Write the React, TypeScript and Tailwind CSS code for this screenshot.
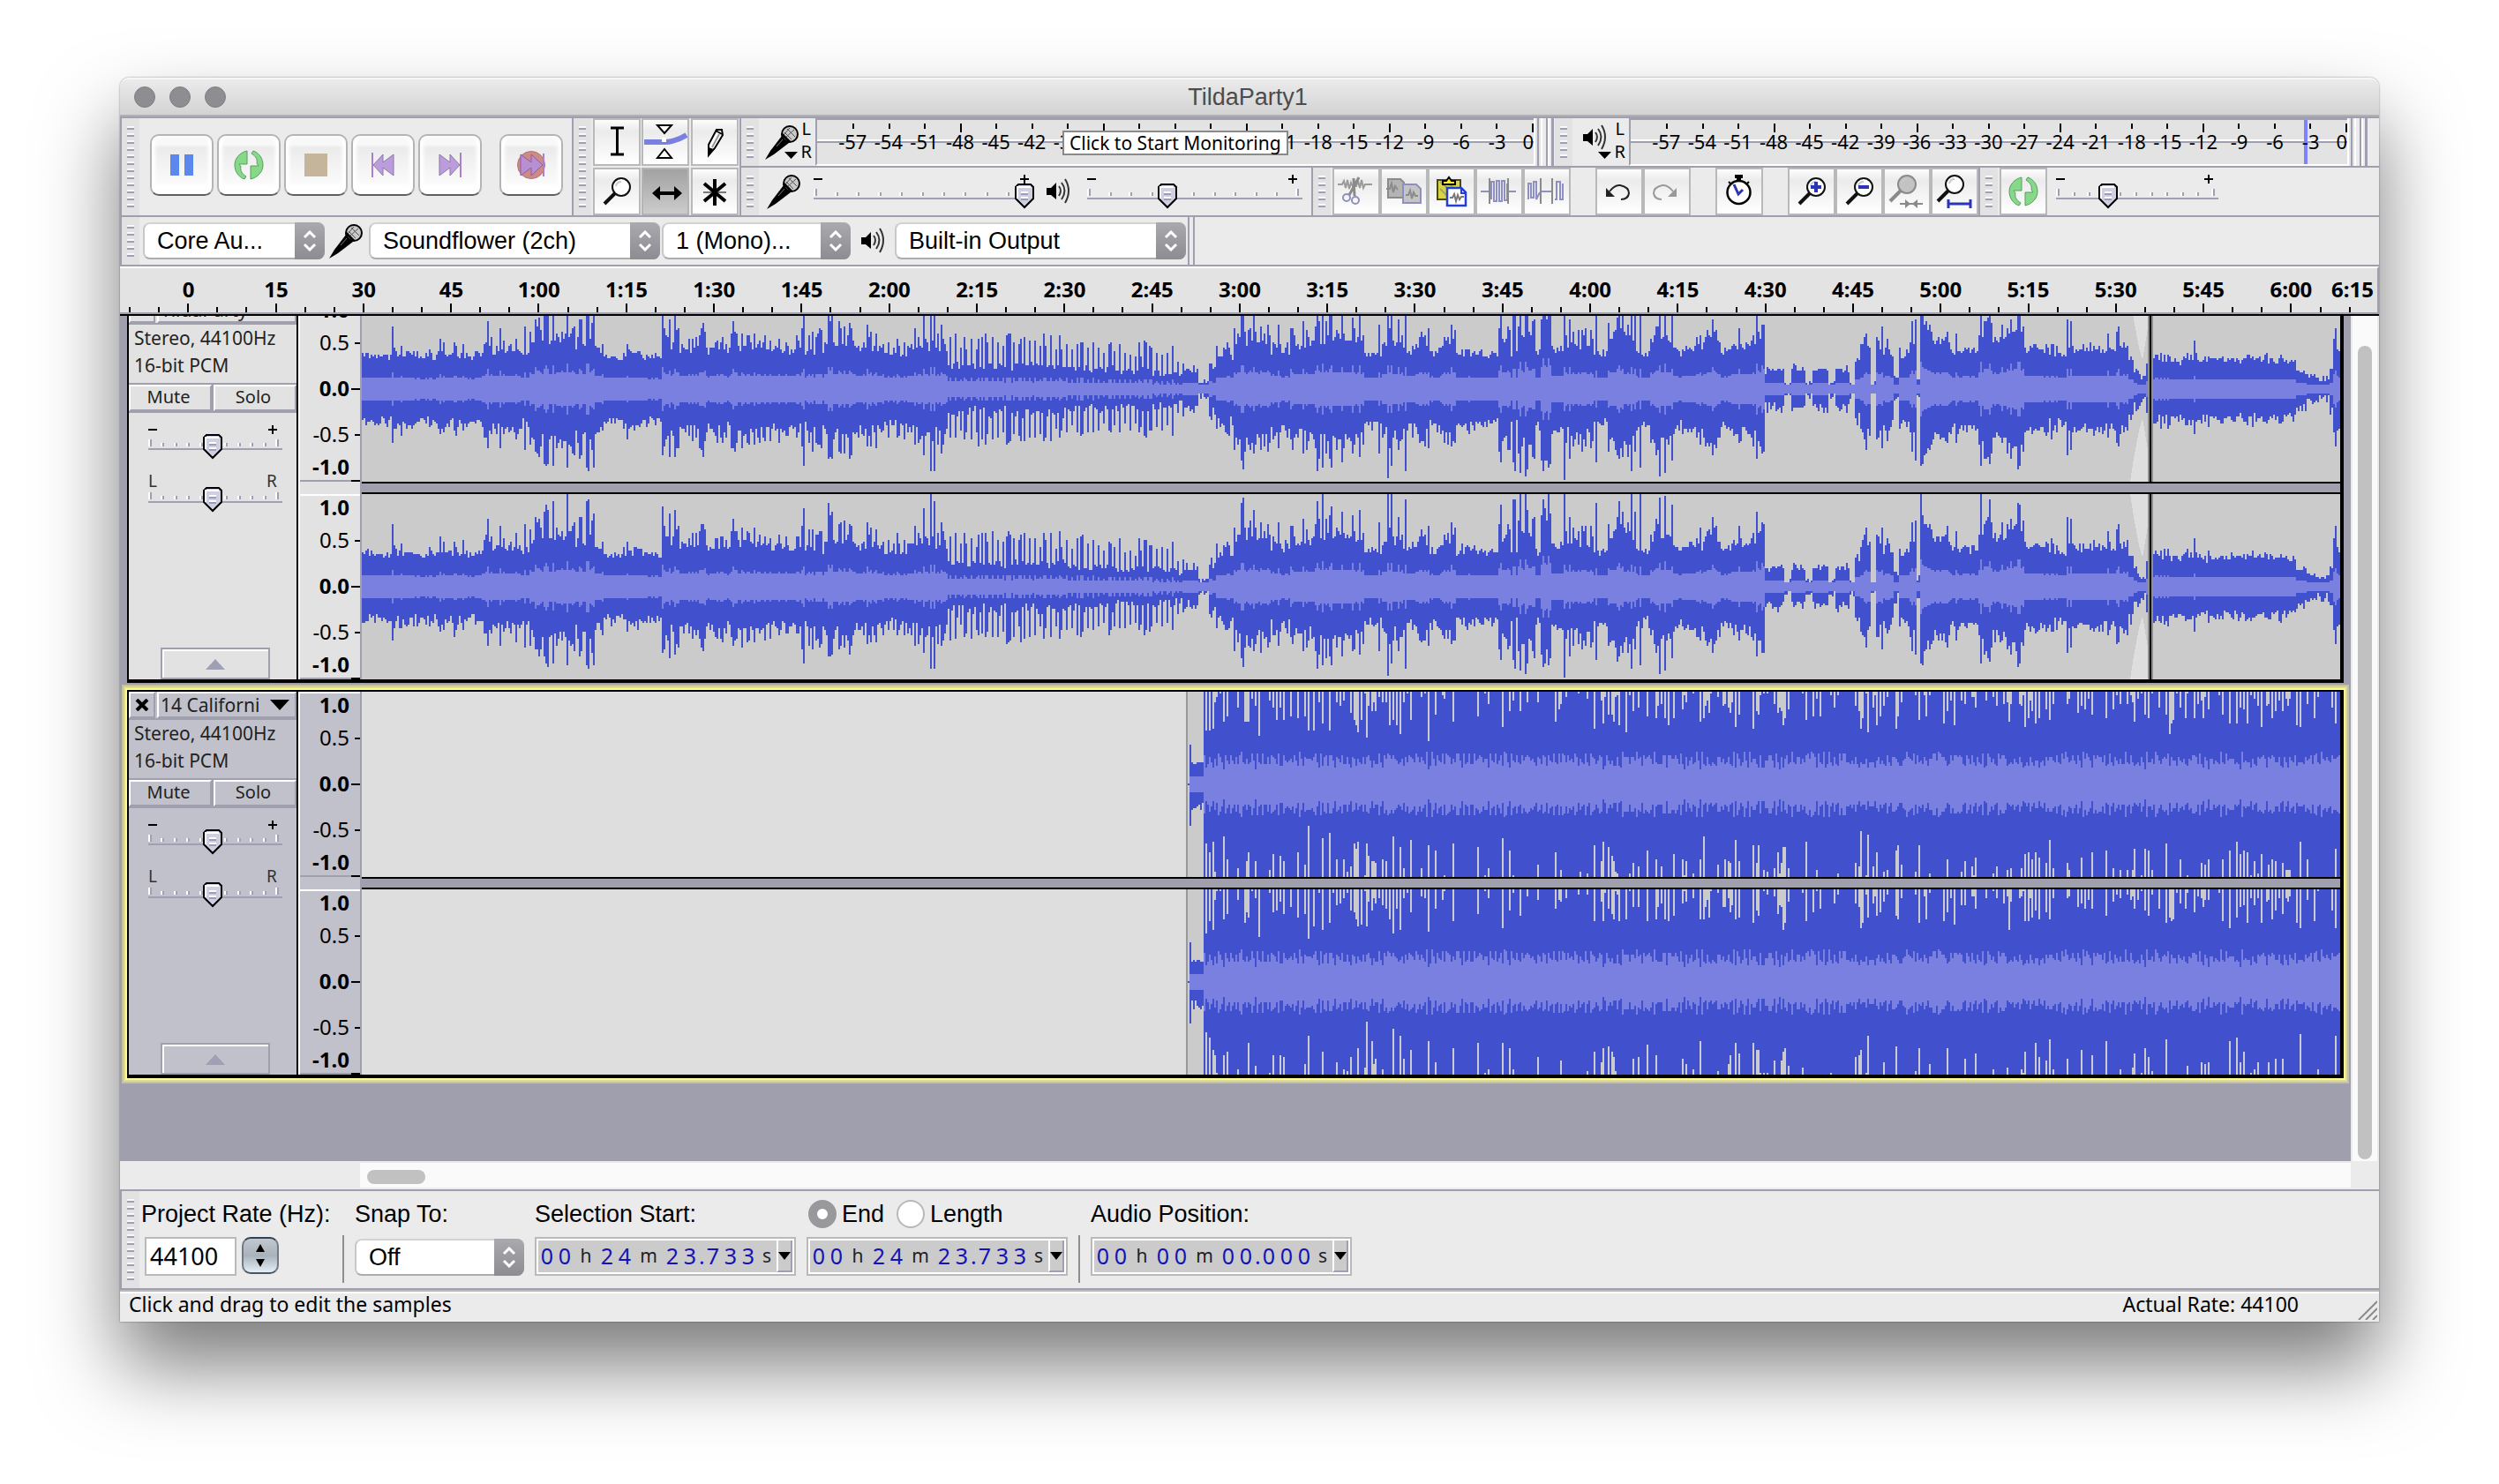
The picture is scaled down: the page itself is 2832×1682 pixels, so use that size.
import React from "react";

const NOTO = "font-['Noto_Sans',sans-serif]";
const HELV = "font-['Liberation_Sans',Arial,sans-serif]";

/* ---------- waveform data ---------- */

type Column = [outerUp: number, outerDown: number, inner: number];

const COLUMNS = 1121;

function random(seed: number) {
  let a = seed;
  return () => {
    a = (a + 0x6d2b79f5) | 0;
    let t = Math.imul(a ^ (a >>> 15), 1 | a);
    t = (t + Math.imul(t ^ (t >>> 7), 61 | t)) ^ t;
    return ((t ^ (t >>> 14)) >>> 0) / 4294967296;
  };
}

/* column, floor and ceiling of the amplitude from that column on */
const ENVELOPE: [number, number, number][] = [
  [0, 0.34, 0.4], [17, 0.35, 0.5], [28, 0.33, 0.4], [45, 0.35, 0.5], [60, 0.33, 0.4],
  [68, 0.4, 0.55], [80, 0.42, 0.62], [90, 0.36, 0.45], [95, 0.45, 0.75], [103, 0.5, 0.85],
  [113, 0.52, 0.9], [120, 0.45, 0.8], [127, 0.52, 0.85], [132, 0.42, 0.5], [137, 0.34, 0.4],
  [150, 0.36, 0.5], [158, 0.33, 0.38], [170, 0.42, 0.8], [182, 0.42, 0.7], [195, 0.38, 0.6],
  [210, 0.42, 0.68], [230, 0.4, 0.6], [248, 0.38, 0.65], [262, 0.45, 0.75], [280, 0.42, 0.68],
  [296, 0.36, 0.58], [310, 0.42, 0.7], [332, 0.22, 0.55], [400, 0.2, 0.5], [420, 0.18, 0.48],
  [445, 0.16, 0.45], [462, 0.12, 0.3], [466, 0.18, 0.24], [474, 0.05, 0.09], [480, 0.2, 0.3],
  [484, 0.34, 0.5], [494, 0.48, 0.68], [506, 0.5, 0.75], [515, 0.4, 0.6], [520, 0.38, 0.5],
  [526, 0.45, 0.7], [540, 0.5, 0.78], [556, 0.5, 0.74], [568, 0.35, 0.48], [578, 0.45, 0.75],
  [590, 0.4, 0.5], [597, 0.45, 0.6], [604, 0.36, 0.44], [612, 0.48, 0.65], [620, 0.36, 0.45],
  [644, 0.5, 0.8], [651, 0.35, 0.42], [655, 0.55, 0.9], [665, 0.35, 0.45], [668, 0.7, 0.95],
  [674, 0.4, 0.5], [682, 0.45, 0.65], [690, 0.45, 0.7], [698, 0.35, 0.4], [706, 0.5, 0.8],
  [714, 0.4, 0.8], [723, 0.35, 0.42], [730, 0.5, 0.75], [742, 0.38, 0.45], [748, 0.42, 0.62],
  [762, 0.5, 0.7], [770, 0.38, 0.45], [776, 0.45, 0.65], [790, 0.55, 0.75], [795, 0.18, 0.24],
  [806, 0.05, 0.08], [810, 0.19, 0.24], [818, 0.05, 0.08], [822, 0.19, 0.24], [831, 0.05, 0.07],
  [835, 0.19, 0.24], [843, 0.05, 0.07], [846, 0.3, 0.55], [851, 0.45, 0.65], [855, 0.04, 0.06],
  [858, 0.45, 0.7], [862, 0.35, 0.55], [868, 0.08, 0.2], [871, 0.35, 0.5], [877, 0.5, 0.78],
  [881, 0.08, 0.15], [883, 0.6, 0.8], [888, 0.5, 0.7], [900, 0.38, 0.48], [916, 0.55, 0.78],
  [924, 0.5, 0.6], [932, 0.6, 0.75], [942, 0.4, 0.48], [952, 0.35, 0.5], [966, 0.4, 0.6],
  [970, 0.4, 0.5], [984, 0.4, 0.5], [994, 0.42, 0.68], [1001, 0.3, 0.4], [1004, 0.16, 0.2],
  [1007, 0.11, 0.14], [1011, 0.25, 0.3], [1015, 0.32, 0.45], [1024, 0.29, 0.38],
  [1050, 0.3, 0.37], [1092, 0.28, 0.34], [1096, 0.19, 0.22], [1102, 0.13, 0.15],
  [1108, 0.11, 0.13], [1115, 0.2, 0.28], [1117, 0.4, 0.6], [1119, 0.38, 0.42],
];

const SPIKES: [number, number][] = [
  [17, 0.68], [44, 0.55], [71, 0.74], [78, 0.65], [92, 0.68], [98, 0.76], [104, 0.88],
  [108, 0.93], [116, 1], [123, 0.75], [127, 0.92], [128, 0.95], [170, 0.86], [177, 0.82],
  [194, 0.62], [210, 0.74], [250, 0.84], [264, 0.9], [266, 0.8], [286, 0.7], [318, 0.84],
  [322, 1], [324, 0.92], [498, 0.9], [499, 0.97], [505, 0.82], [519, 0.7], [526, 0.65],
  [533, 0.74], [541, 0.92], [544, 1], [549, 0.86], [555, 0.74], [561, 0.78], [565, 0.82],
  [576, 0.7], [581, 1], [583, 1], [587, 0.76], [591, 0.94], [604, 0.66], [617, 0.7],
  [645, 0.88], [652, 0.94], [653, 0.94], [656, 1], [659, 1], [669, 0.95], [672, 1], [681, 1],
  [684, 0.76], [699, 0.9], [712, 0.92], [714, 0.8], [719, 1], [721, 0.8], [724, 1],
  [735, 0.96], [738, 0.98], [742, 0.88], [765, 0.76], [780, 0.66], [790, 0.8], [793, 0.7],
  [883, 1], [903, 0.6], [917, 1], [922, 0.95], [929, 0.7], [934, 0.74], [938, 0.9],
  [939, 0.88], [966, 0.76], [968, 0.74], [989, 0.6], [995, 0.68], [1038, 0.52], [1118, 0.66],
];

function musicColumns(seed: number): Column[] {
  const shared = random(41);
  const own = random(seed);
  const spikes = new Map(SPIKES);
  const out: Column[] = [];
  let segment = 0;
  for (let i = 0; i < COLUMNS; i++) {
    while (segment + 1 < ENVELOPE.length && ENVELOPE[segment + 1][0] <= i) segment++;
    const [, low, high] = ENVELOPE[segment];
    const sparse = i >= 332 && i < 466;
    const r = shared();
    const beat = sparse ? (i % 3 === 0 || r > 0.9 ? 0.6 + r * 0.5 : r * 0.2) : r * r;
    const spike = spikes.get(i) ?? 0;
    const base = low + (high - low) * beat;
    const up = Math.max(base + (own() - 0.5) * 0.06, spike);
    const down = Math.max(base + (own() - 0.5) * 0.1, spike * (0.82 + 0.18 * shared()));
    const inner = Math.max(0.045, Math.min(0.36, low * 0.34 + (spike ? spike * 0.1 : (base - low) * 0.16)));
    out.push(i >= 1012 && i < 1015 ? [0, 0, 0] : [Math.min(1, up), Math.min(1, down), inner]);
  }
  return out;
}

function loudColumns(seed: number, lowerDensity: number): Column[] {
  const shared = random(977);
  const own = random(seed);
  const out: Column[] = [];
  for (let i = 0; i < COLUMNS; i++) {
    const r = shared();
    const s = shared();
    if (i < 468) out.push([0, 0, 0]);
    else if (i === 468) out.push([0.01, 0.01, 0]);
    else if (i < 477) out.push([i === 469 ? 0.42 : 0.21 + own() * 0.04, i === 469 ? 0.44 : 0.2 + own() * 0.1, 0.08]);
    else {
      const early = i < 620 ? 1 : 0.8;
      const notch = i % 2 === 0 ? 0.72 * early : 0.16;
      const up = r < notch ? 1 - Math.pow(own() * 0.25 + s * 0.75, 1.5) * 0.6 * early : 1;
      const down = r < notch * lowerDensity ? 1 - Math.pow(own() * 0.3 + s * 0.7, 1.7) * 0.62 * early : 1;
      const pulse = [0.32, 0.25, 0.2, 0.32, 0.27, 0.22, 0.3, 0.24, 0.21][(i + (s > 0.8 ? 1 : 0)) % 9];
      out.push([up, down, pulse + (r - 0.5) * 0.07]);
    }
  }
  return out;
}

/* stepped outline around the centre line, on a 105-row grid */
function outline(up: number[], down: number[]) {
  const mid = 52.5;
  const rows = (v: number) => (v > 0 ? Math.round(v * 52.5 - 0.5) + 0.5 : 0);
  const top = up.map((v, i) => `V${mid - rows(v)}H${i + 1}`).join("");
  const bottom = down
    .map((v, i) => `V${mid + rows(v)}H${i}`)
    .reverse()
    .join("");
  return `M0 ${mid}${top}${bottom}Z`;
}

function Waveform({ columns, clip, faded }: { columns: Column[]; clip: number; faded?: boolean }) {
  return (
    <svg
      viewBox="0 0 1121 105"
      preserveAspectRatio="none"
      shapeRendering="crispEdges"
      className="block h-[210px] w-full bg-[#dedede]"
      aria-hidden="true"
    >
      <rect x={clip} y="0" width={1121 - clip} height="105" fill="#cbcbcb" />
      {clip > 0 && <rect x={clip} y="0" width="1" height="105" fill="#999999" />}
      {faded && (
        <path d="M1002 0H1012V18L1009 36L1007 29L1004 13ZM1002 105H1012V87L1009 69L1007 76L1004 92Z" fill="#dedede" />
      )}
      <path d={outline(columns.map((c) => c[0]), columns.map((c) => c[1]))} fill="#4150cd" />
      <path d={outline(columns.map((c) => c[2]), columns.map((c) => c[2]))} fill="#7980e0" />
      {faded && (
        <>
          <rect x="1012" y="0" width="3" height="105" fill="#8f8f8f" />
          <rect x="1013" y="0" width="1" height="105" fill="#000" />
        </>
      )}
    </svg>
  );
}

/* ---------- small parts ---------- */

function Grabber({ bumps }: { bumps: number }) {
  return (
    <div className="flex w-5 shrink-0 flex-col items-center justify-center gap-1 self-stretch bg-[#e2e2e2]">
      {Array.from({ length: bumps }, (_, i) => (
        <span key={i} className="block h-1 w-2 border-b-2 border-[#a0a0b4] bg-[#f8f8ff]" />
      ))}
    </div>
  );
}

function Mic({ menu }: { menu?: boolean }) {
  return (
    <svg width="40" height="40" viewBox="0 0 40 40" aria-hidden="true">
      <path d="M20 13L28 21L11 34L1 40L7 30Z" fill="#000" />
      <path d="M22 16L14 25" stroke="#777" strokeWidth="1" />
      <circle cx="29" cy="11" r="9" fill="#c9c9c9" stroke="#000" strokeWidth="2" />
      <path d="M23 9L31 17M26 5L35 14M24 15L34 6M22 12L29 4" stroke="#555" strokeWidth="1" />
      <path d="M20 11L29 20" stroke="#000" strokeWidth="3" />
      {menu && <path d="M23 31H38L30.500 39Z" fill="#000" />}
    </svg>
  );
}

function Speaker({ menu }: { menu?: boolean }) {
  const height = menu ? 40 : 30;
  return (
    <svg width="32" height={height} viewBox={`0 0 32 ${height}`} aria-hidden="true">
      <path d="M0 11H5L11 5V24L5 19H0Z" fill="#000" />
      <path d="M14 9Q18 14 14 20M17 5Q24 14 17 24M21 1Q29 14 21 28" fill="none" stroke="#333" strokeWidth="2" />
      {menu && <path d="M17 31H32L24.500 39Z" fill="#000" />}
    </svg>
  );
}

const LOOP_HALF = "M14 0C6 2 0 8 0 16C0 24 5 30 11 32L13 29C8 26 6 22 7 18L5 15H14Z";

function Loop() {
  return (
    <svg width="34" height="34" viewBox="-1 -1 34 34" aria-hidden="true">
      <g fill="#86d989" stroke="#5c9c60" strokeWidth="1">
        <path d={LOOP_HALF} />
        <path d={LOOP_HALF} transform="rotate(180 16 16)" />
      </g>
    </svg>
  );
}

function Slider({ label, width, at, ends }: { label: string; width: number; at: number; ends?: [string, string] }) {
  const step = (width - 8) / 10;
  const [value, setValue] = React.useState(Math.round((at / width) * 100));
  return (
    <label className="relative block shrink-0">
      <input
        type="range"
        aria-label={label}
        value={value}
        onChange={(e) => setValue(Number(e.target.value))}
        className="absolute inset-0 z-10 h-full w-full opacity-0"
      />
      <svg width={width} height="42" viewBox={`0 0 ${width} 42`} className="block overflow-visible" aria-hidden="true">
        {ends ? (
          <g fontSize="19" fill="#333" className={NOTO}>
            <text x="0" y="12">{ends[0]}</text>
            <text x={width - 18} y="12">{ends[1]}</text>
          </g>
        ) : (
          <path d={`M0 7H10M${width - 16} 7H${width - 6}M${width - 11} 2V12`} stroke="#000" strokeWidth="2" />
        )}
        {Array.from({ length: 11 }, (_, i) => {
          const x = Math.round(i * step);
          const y = i % 10 === 0 ? 18 : 22;
          return (
            <g key={i}>
              <rect x={x} y={y} width="2" height={26 - y} fill="#fff" />
              <rect x={x + 2} y={y} width="2" height={26 - y} fill="#a0a0b4" />
            </g>
          );
        })}
        <rect x="0" y="28" width={width} height="2" fill="#a0a0b4" />
        <g transform={`translate(${at - 11} 12)`}>
          <path d="M4 1H18L21 4V17L11 27L1 17V4Z" fill="#cfcfe4" stroke="#000" strokeWidth="2" />
          <path d="M3 17V4H18" fill="none" stroke="#fff" strokeWidth="2" />
          <path d="M7 10H15M7 16H15" stroke="#fff" strokeWidth="2" />
          <path d="M7 12H15M7 18H15" stroke="#9c9cb4" strokeWidth="2" />
        </g>
      </svg>
    </label>
  );
}

function Select({ label, text, box }: { label: string; text: string; box: string }) {
  return (
    <div className={`relative h-[42px] shrink-0 ${box}`}>
      <select
        aria-label={label}
        className={`${HELV} h-full w-full appearance-none rounded-lg border-2 border-t-[#d2d2d2] border-r-[#c8c8c8] border-b-[#adadad] border-l-[#c8c8c8] bg-white pl-[14px] text-[27px] leading-[36px] text-black`}
      >
        <option>{text}</option>
      </select>
      <span className="pointer-events-none absolute inset-y-0 right-0 flex w-[34px] items-center justify-center rounded-r-lg bg-linear-to-b from-[#a9a9ae] to-[#8c8c92]">
        <svg width="16" height="24" viewBox="0 0 16 24" fill="none" stroke="#fff" strokeWidth="3" aria-hidden="true">
          <path d="M2 8L8 2L14 8M2 16L8 22L14 16" />
        </svg>
      </span>
    </div>
  );
}

function Transport({ label, children }: { label: string; children: React.ReactNode }) {
  return (
    <button
      aria-label={label}
      className="flex h-[70px] w-[72px] items-center justify-center rounded-[10px] border-2 border-t-[#b4b4b4] border-r-[#b4b4b4] border-b-[#606060] border-l-[#b4b4b4] bg-linear-to-b from-[#f8f8f8] from-15% via-[#ebebeb] via-20% to-white shadow-[inset_4px_0_4px_#fff,inset_-4px_0_4px_#fff,inset_0_-10px_6px_#fff]"
    >
      {children}
    </button>
  );
}

function Skip({ flip }: { flip?: boolean }) {
  return (
    <svg width="28" height="30" viewBox="0 0 28 30" className={flip ? "rotate-180" : ""} aria-hidden="true">
      <path d="M2 1V29" stroke="#a97fd0" strokeWidth="2" />
      <path d="M3 15L14 3V12L26 3V27L14 18V27Z" fill="#bb9cdc" stroke="#8d79a3" strokeWidth="1" />
    </svg>
  );
}

function Tool({ label, selected, children }: { label: string; selected?: boolean; children: React.ReactNode }) {
  return (
    <button
      aria-label={label}
      aria-pressed={selected}
      className={`h-[54px] w-[54px] shrink-0 border-2 ${
        selected
          ? "border-[#b4b4b4] bg-linear-to-b from-[#a2a2a2] to-[#cccccc]"
          : "border-[#b9b9b9] bg-linear-to-b from-[#fdfdfd] via-[#ebebeb] via-25% to-white"
      }`}
    >
      <svg width="50" height="50" viewBox="2 2 50 50" className="block" fill="none" aria-hidden="true">
        {children}
      </svg>
    </button>
  );
}

function Lens({ x, y, grey, children }: { x: number; y: number; grey?: boolean; children?: React.ReactNode }) {
  const ink = grey ? "#8a8a8a" : "#111";
  return (
    <>
      <path d={`M${x - 7} ${y + 7}L${x - 19} ${y + 19}`} stroke={ink} strokeWidth="4" />
      <circle cx={x} cy={y} r="10" fill={grey ? "#c3c3c3" : "#fff"} stroke={ink} strokeWidth="2" />
      <path d={`M${x - 6} ${y - 1}Q${x - 5} ${y - 6} ${x} ${y - 6}`} stroke="#c8c8c8" strokeWidth="2" />
      {children}
    </>
  );
}

/* ---------- meters ---------- */

function Meter({ label, icon, overlay, peak, box, tail }: {
  label: string; icon: React.ReactNode; overlay?: string; peak?: boolean; box: string; tail: string;
}) {
  return (
    <div className={`flex h-[54px] grow ${box}`}>
      <Grabber bumps={5} />
      <button aria-label={label} className="flex w-16 shrink-0 items-center justify-between pr-1 pl-1.5">
        {icon}
        <span className={`${NOTO} flex h-full flex-col justify-between pb-1 text-[20px] leading-[24px] text-black`}>
          <span>L</span>
          <span>R</span>
        </span>
      </button>
      <div className="relative flex-1 border-t-2 border-b-2 border-l-2 border-t-[#9f9fb0] border-b-white border-l-[#9f9fb0] bg-[#e3e3e3]">
        <svg viewBox="0 0 812 50" preserveAspectRatio="none" className="absolute inset-0 h-full w-full" shapeRendering="crispEdges" aria-hidden="true">
          <rect y="22" width="812" height="2" fill="#fff" />
          <rect y="24" width="812" height="2" fill="#9f9fb0" />
          {peak && <rect x="763" width="4" height="50" fill="#7b83ff" />}
          {Array.from({ length: 20 }, (_, i) => (
            <rect key={i} x={Math.round(40 + i * 40.5)} y="4" width="2" height={i % 4 === 3 ? 10 : 6} fill="#000" />
          ))}
        </svg>
        <div className={`${NOTO} relative flex pt-2 pl-5 text-[22px] leading-[32px] text-black`}>
          {Array.from({ length: 19 }, (_, i) => (
            <span key={i} className={`w-0 flex-1 text-center whitespace-nowrap ${overlay && i > 6 && i < 12 ? "invisible" : ""}`}>
              {-57 + i * 3}
            </span>
          ))}
          <span className="w-[21px] text-right">0</span>
        </div>
        {overlay && (
          <span className={`${NOTO} absolute top-3 left-[278px] border-2 border-[#8a8a8a] bg-white px-1.5 text-[21px] leading-[24px] whitespace-nowrap text-black`}>
            {overlay}
          </span>
        )}
      </div>
      <div className={`flex shrink-0 bg-[#ebebeb] ${tail}`}>
        <span className="w-1 border-l-2 border-white bg-[#e3e3e3]" />
        <span className="w-1.5 border-r-2 border-l-2 border-l-[#9f9fb0] border-r-white bg-[#e3e3e3]" />
        <span className="ml-1 w-1 border-l-2 border-[#9f9fb0] bg-white" />
        <span className="ml-0.5 w-[3px] bg-[#9f9fb0]" />
      </div>
    </div>
  );
}

/* ---------- tracks ---------- */

function Scale() {
  const rows: [string, string, boolean][] = [
    ["1.0", "h-7 font-bold", false],
    ["0.5", "h-[46px]", true],
    ["0.0", "h-[58px] font-bold", true],
    ["-0.5", "h-[46px]", true],
    ["-1.0", "h-7 font-bold", false],
  ];
  return (
    <div className={`${NOTO} h-[210px] border-t-2 border-white text-[24px] leading-[24px] text-black`}>
      {rows.map(([text, style, tick]) => (
        <div key={text} className={`flex items-center justify-end ${style}`}>
          <span className="pb-0.5">{text}</span>
          <span className="flex w-3 justify-end">
            {tick && <span className={`h-0.5 bg-black ${text === "0.0" ? "w-2.5" : "w-1.5"}`} />}
          </span>
        </div>
      ))}
      <div className="flex h-0.5 justify-end bg-[#9f9fae]">
        <span className="w-2.5 bg-black" />
      </div>
    </div>
  );
}

const BEVEL = "border-t-2 border-l-2 border-r-2 border-b-2 border-t-white border-l-white border-r-[#9f9fae] border-b-[#9f9fae]";

function Track({ name, focused, channels, clip, faded }: {
  name: string; focused?: boolean; channels: Column[][]; clip: number; faded?: boolean;
}) {
  const tint = focused ? "bg-[#c1c1cc]" : "bg-[#e2e2e2]";
  return (
    <section
      aria-label={name}
      className={`flex h-[440px] border-t-2 border-r-4 border-b-4 border-l-2 border-black bg-black ${
        focused ? "shadow-[0_0_0_2px_#fffb92,0_0_0_4px_#dddb98,0_0_0_6px_#c4c39c]" : ""
      }`}
    >
      <div className={`${NOTO} flex h-[434px] w-[190px] shrink-0 flex-col text-[21px] text-[#222] ${tint}`}>
        <div className="flex h-[30px]">
          <button aria-label="Close track" className={`flex w-[30px] items-center justify-center ${BEVEL}`}>
            <svg width="16" height="14" viewBox="0 0 16 14" aria-hidden="true">
              <path d="M2 1L14 13M14 1L2 13" stroke="#000" strokeWidth="4" />
            </svg>
          </button>
          <button className={`ml-0.5 flex flex-1 items-center justify-between pr-1.5 pl-0.5 leading-[26px] ${BEVEL}`}>
            <span>{name}</span>
            <svg width="22" height="12" viewBox="0 0 22 12" aria-hidden="true">
              <path d="M0 0H22L11 12Z" fill="#000" />
            </svg>
          </button>
        </div>
        <div className="border-t-2 border-b-2 border-[#9f9fae] pl-1.5 pb-1 leading-[31px]">
          <p>Stereo, 44100Hz</p>
          <p>16-bit PCM</p>
        </div>
        <div className="flex h-8 border-b-2 border-[#9f9fae] text-[20px] leading-[24px]">
          <button className={`flex-1 pr-1 pb-0.5 ${BEVEL}`}>Mute</button>
          <span className="w-0.5 bg-[#9f9fae]" />
          <button className={`flex-1 pr-1 pb-0.5 ${BEVEL}`}>Solo</button>
        </div>
        <div className="flex flex-col gap-[18px] pt-3 pl-[22px]">
          <Slider label={`${name} gain`} width={152} at={73} />
          <Slider label={`${name} pan`} width={152} at={73} ends={["L", "R"]} />
        </div>
        <button
          aria-label="Collapse track"
          className="mt-auto ml-9 flex h-9 w-[124px] items-center justify-center border-2 border-[#9f9fae] pt-0.5 shadow-[inset_2px_2px_0_#fff]"
        >
          <svg width="22" height="12" viewBox="0 0 22 12" aria-hidden="true">
            <path d="M11 0L22 12H0Z" fill="#a0a0b4" />
          </svg>
        </button>
      </div>
      <div className={`ml-0.5 flex w-[72px] shrink-0 flex-col gap-3.5 border-r-2 border-l-2 border-l-white border-r-[#9f9fae] ${tint}`}>
        <Scale />
        <Scale />
      </div>
      <div className="flex min-w-0 flex-1 flex-col">
        <Waveform columns={channels[0]} clip={clip} faded={faded} />
        <div className="h-3.5 border-t-2 border-b-2 border-black bg-[#9f9fae]" />
        <Waveform columns={channels[1]} clip={clip} faded={faded} />
      </div>
    </section>
  );
}

/* ---------- selection bar ---------- */

function TimeField({ label, value }: { label: string; value: string }) {
  return (
    <div role="group" aria-label={label} className="flex h-11 w-[296px] border-2 border-[#b9b9b9] bg-white p-0.5">
      <div className={`${NOTO} flex flex-1 items-center bg-[#cbcbcb] pb-0.5 leading-[34px]`}>
        {value.split("").map((c, i) => {
          if (c === "h") return <span key={i} className="w-7 text-center text-[21px] text-[#222]">h</span>;
          if (c === "m") return <span key={i} className="w-[34px] text-center text-[21px] text-[#222]">m</span>;
          if (c === "s") return <span key={i} className="w-[22px] text-center text-[21px] text-[#222]">s</span>;
          if (c === ".") return <span key={i} className="w-1.5 text-center text-[25px] text-[#1414b4]">.</span>;
          return <span key={i} className="w-5 text-center text-[25px] text-[#1414b4]">{c}</span>;
        })}
      </div>
      <button aria-label={`${label} format`} className="flex w-[18px] items-center justify-center border-r-2 border-b-2 border-l-2 border-r-[#9f9fb4] border-b-[#9f9fb4] border-l-white bg-[#cbcbcb]">
        <svg width="14" height="9" viewBox="0 0 14 9" className="shrink-0" aria-hidden="true">
          <path d="M0 0H14L7 9Z" fill="#000" />
        </svg>
      </button>
    </div>
  );
}

const TIMES = Array.from({ length: 25 }, (_, i) => {
  const s = i * 15;
  return s < 60 ? String(s) : `${Math.floor(s / 60)}:${String(s % 60).padStart(2, "0")}`;
});

export default function App() {
  const first = React.useMemo(() => [musicColumns(3), musicColumns(8)], []);
  const second = React.useMemo(() => [loudColumns(5, 0.75), loudColumns(12, 0.5)], []);
  const [mode, setMode] = React.useState("end");

  return (
    <div className="min-h-screen overflow-hidden bg-white px-[136px] pt-[88px] pb-[184px]">
      <main className="rounded-t-[10px] bg-[#ebebeb] shadow-[0_0_2px_rgba(0,0,0,0.5),0_50px_90px_rgba(0,0,0,0.52)]">
        <header className="relative flex h-11 items-center gap-4 rounded-t-[10px] border-t-2 border-b-2 border-t-[#f6f6f6] border-b-[#b1b1b1] bg-linear-to-b from-[#ebebeb] to-[#d3d3d3] pl-4">
          <button aria-label="Close" className="h-6 w-6 rounded-full border border-[#7e7e82] bg-[#8e8e92]" />
          <button aria-label="Minimize" className="h-6 w-6 rounded-full border border-[#7e7e82] bg-[#8e8e92]" />
          <button aria-label="Zoom window" className="h-6 w-6 rounded-full border border-[#7e7e82] bg-[#8e8e92]" />
          <h1 className={`${HELV} flex-1 pr-[140px] text-center text-[27px] leading-[40px] text-[#4c4c4c]`}>TildaParty1</h1>
        </header>

        {/* toolbars */}
        <div className="flex border-t-2 border-b-2 border-[#9f9fb0]">
          <div className="flex h-[110px] w-[514px] shrink-0 items-center border-r-2 border-l-2 border-[#9f9fb0]">
            <Grabber bumps={12} />
            <div className="flex flex-1 gap-1 pb-1 pl-3">
              <Transport label="Pause">
                <svg width="28" height="26" viewBox="0 0 28 26" aria-hidden="true">
                  <path d="M1 1H11V25H1ZM17 1H27V25H17Z" fill="#5c88ee" />
                </svg>
              </Transport>
              <Transport label="Play looped"><Loop /></Transport>
              <Transport label="Stop"><span className="h-[26px] w-[26px] bg-[#c4b59b]" /></Transport>
              <Transport label="Skip to start"><Skip /></Transport>
              <Transport label="Skip to end"><Skip flip /></Transport>
              <span className="w-3" />
              <Transport label="Append record">
                <svg width="34" height="34" viewBox="0 0 34 34" aria-hidden="true">
                  <circle cx="17" cy="17" r="15.500" fill="#d08a86" stroke="#a87a78" />
                  <path d="M31 4V30" stroke="#a97fd0" strokeWidth="2" />
                  <path d="M5 5L17 14V5L30 17L17 29V20L5 29Z" fill="#b98fd4" stroke="#8d5f9f" />
                </svg>
              </Transport>
            </div>
          </div>

          <div className="flex h-[110px] w-[190px] shrink-0 border-r-2 border-[#9f9fb0]">
            <Grabber bumps={12} />
            <div className="grid flex-1 grid-cols-3 content-between pl-0.5">
              <Tool label="Selection tool">
                <path d="M20 11H35M20 41H35M27.500 11V41" stroke="#000" strokeWidth="3" />
              </Tool>
              <Tool label="Envelope tool">
                <path d="M18 8H34L26 17Z M18 45H34L26 35Z" stroke="#000" strokeWidth="2" fill="#fff" />
                <path d="M3 27H26Q38 27 51 19" stroke="#7980e0" strokeWidth="6" />
                <rect x="23" y="22" width="5" height="5" fill="#fff" />
              </Tool>
              <Tool label="Draw tool">
                <path d="M20 41L20 30L29 13H35L36 19L27 34Z" fill="#fff" stroke="#000" strokeWidth="2" />
                <path d="M20 42V34L25 36ZM28 14L35 18" fill="#000" stroke="#000" strokeWidth="2" />
                <path d="M24 33L32 18" stroke="#999" strokeWidth="2" />
              </Tool>
              <Tool label="Zoom tool"><Lens x={32} y={22} /></Tool>
              <Tool label="Time shift tool" selected>
                <path d="M18 29H40" stroke="#000" strokeWidth="4" />
                <path d="M12 29L21 21V37ZM46 29L37 21V37Z" fill="#000" />
              </Tool>
              <Tool label="Multi tool">
                <path d="M27 13V43M15 18L39 38M39 18L15 38" stroke="#000" strokeWidth="4" />
                <path d="M14 28H40" stroke="#000" strokeWidth="1" />
              </Tool>
            </div>
          </div>

          <div className="flex min-w-0 flex-1 flex-col">
            <div className="flex border-b-2 border-[#9f9fb0]">
              <Meter label="Recording meter" icon={<Mic menu />} overlay="Click to Start Monitoring" box="basis-[922px]" tail="w-6" />
              <Meter label="Playback meter" icon={<span className="pl-1.5"><Speaker menu /></span>} peak box="basis-[934px]" tail="w-9" />
            </div>
            <div className="flex h-[54px]">
              <Grabber bumps={5} />
              <div className="flex w-[628px] shrink-0 items-center border-r-2 border-[#9f9fb0] pl-2">
                <Mic />
                <span className="w-3.5" />
                <Slider label="Recording volume" width={250} at={239} />
                <span className="w-3.5" />
                <Speaker />
                <span className="w-3.5" />
                <Slider label="Playback volume" width={244} at={91} />
              </div>
              <Grabber bumps={5} />
              <span className="w-0.5" />
              <Tool label="Cut">
                <path d="M6 19H11L13 15L15 23L17 14L19 24L21 17L23 21H27L29 15L31 23L33 14L35 23L37 19H45" stroke="#9a9a9a" strokeWidth="2" />
                <path d="M30 11L19 31M24 12L25 32" stroke="#8a8a8a" strokeWidth="3" />
                <circle cx="16" cy="34" r="4" stroke="#8e90c0" strokeWidth="2" />
                <circle cx="26" cy="37" r="4" stroke="#8e90c0" strokeWidth="2" />
              </Tool>
              <Tool label="Copy">
                <path d="M9 13H23L27 17V34H9Z" fill="#b4b4b4" stroke="#8a8a8a" strokeWidth="2" />
                <path d="M7 24H11L13 18L15 28L17 21L20 25" stroke="#8a8a8a" strokeWidth="2" />
                <path d="M26 19H41L46 24V40H26Z" fill="#c4c4c4" stroke="#8e90c0" strokeWidth="2" />
                <path d="M29 31H32L34 26L36 35L38 28L40 32H43" stroke="#8a8a8a" strokeWidth="2" />
              </Tool>
              <Tool label="Paste">
                <path d="M11 14H37V36H11Z" fill="#d9d544" stroke="#4a481a" strokeWidth="2" />
                <path d="M14 16L34 34M14 24L24 34M22 16L34 28" stroke="#a9a568" strokeWidth="2" />
                <path d="M17 19V15H21L24 11L27 15H31V19Z" fill="#ffee22" stroke="#000" strokeWidth="2" />
                <path d="M22 23H38L43 28V43H22Z" fill="#fff" stroke="#1f3fd8" strokeWidth="2.500" />
                <path d="M38 23V29H43" stroke="#1f3fd8" strokeWidth="2" />
                <path d="M25 34H28L30 30L32 38L34 31L36 36L38 33H41" stroke="#777" strokeWidth="2" />
              </Tool>
              <Tool label="Trim">
                <path d="M6 27H16M38 27H46M18 36V16H21V38H24V15H27V38H30V15H33V37H36V18" stroke="#8e90c4" strokeWidth="2" />
                <path d="M16 12V41M37 12V41" stroke="#8a8a8a" strokeWidth="2" />
              </Tool>
              <Tool label="Silence">
                <path d="M6 36V18H9V34H12V16H15V36L19 28M20 27H33M36 36H38V16H42V36H45V18" stroke="#8e90c4" strokeWidth="2" />
                <path d="M20 12V41M33 12V41" stroke="#8a8a8a" strokeWidth="2" />
              </Tool>
              <span className="w-7" />
              <Tool label="Undo">
                <path d="M16 27Q22 19 28 20Q38 22 38 29Q37 36 29 36" stroke="#222" strokeWidth="2" />
                <path d="M12 23V33H22Z" fill="#222" />
              </Tool>
              <Tool label="Redo">
                <path d="M34 27Q28 19 22 20Q12 22 12 29Q13 36 21 36" stroke="#999" strokeWidth="2" />
                <path d="M38 23V33H28Z" fill="#999" />
              </Tool>
              <span className="w-7" />
              <Tool label="Sync-lock">
                <path d="M23 9H30V11H23ZM25 12H28V15H25Z" fill="#000" stroke="#000" strokeWidth="2" />
                <path d="M15 16L18 19M38 16L35 19" stroke="#000" strokeWidth="2" />
                <circle cx="26.500" cy="28" r="13" fill="#fff" stroke="#000" strokeWidth="2.500" />
                <path d="M21 19L26 30L31 25" stroke="#2a35b8" strokeWidth="3" />
              </Tool>
              <span className="w-7" />
              <Tool label="Zoom in">
                <Lens x={32} y={22}><path d="M32 16V28M26 22H38" stroke="#2a35b8" strokeWidth="4" /></Lens>
              </Tool>
              <Tool label="Zoom out">
                <Lens x={32} y={22}><path d="M26 22H38" stroke="#2a35b8" strokeWidth="4" /></Lens>
              </Tool>
              <Tool label="Fit selection">
                <Lens x={27} y={19} grey>
                  <path d="M19 41H45" stroke="#8a8a8a" strokeWidth="2" />
                  <path d="M25 36L31 41L25 46ZM39 36L33 41L39 46Z" fill="#8a8a8a" />
                </Lens>
              </Tool>
              <Tool label="Fit project">
                <Lens x={27} y={19}>
                  <path d="M20 36V46M45 36V46M20 41H45" stroke="#2a35b8" strokeWidth="3" />
                </Lens>
              </Tool>
              <span className="w-0.5 bg-[#9f9fb0]" />
              <Grabber bumps={5} />
              <button aria-label="Play at speed" className="ml-0.5 flex h-[54px] w-[54px] items-center justify-center border-2 border-[#b9b9b9] bg-linear-to-b from-[#fdfdfd] via-[#ebebeb] via-25% to-white">
                <Loop />
              </button>
              <div className="flex items-center pl-2.5">
                <Slider label="Playback speed" width={184} at={59} />
              </div>
            </div>
          </div>
        </div>

        <div className="flex h-14 border-b-2 border-l-2 border-[#9f9fb0]">
          <Grabber bumps={5} />
          <div className="flex items-center pl-1">
            <Select label="Audio host" text="Core Au..." box="w-[206px]" />
            <span className="w-1" />
            <Mic />
            <span className="w-1.5" />
            <Select label="Recording device" text="Soundflower (2ch)" box="w-[330px]" />
            <span className="w-0.5" />
            <Select label="Recording channels" text="1 (Mono)..." box="w-[214px]" />
            <span className="w-3" />
            <Speaker />
            <span className="w-1.5" />
            <Select label="Playback device" text="Built-in Output" box="w-[330px]" />
          </div>
          <span className="ml-0.5 w-2 border-r-2 border-l-2 border-[#9f9fb0]" />
        </div>

        {/* timeline */}
        <div className="border-t-2 border-r-2 border-b-2 border-t-white border-r-[#9f9fb0] border-b-[#9f9fb0] bg-[#e3e3e3]">
          <div className={`${NOTO} flex h-10 items-end pl-[28px] text-[24px] leading-[32px] font-bold text-black`}>
            {TIMES.map((t) => (
              <span key={t} className="w-0 flex-1 text-center">{t}</span>
            ))}
            <span className="flex w-12 justify-end pr-1">6:15</span>
          </div>
          <svg viewBox="0 0 2558 10" preserveAspectRatio="none" className="block h-2.5 w-full" shapeRendering="crispEdges" aria-hidden="true">
            {Array.from({ length: 77 }, (_, i) => {
              const major = i % 3 === 2;
              return <rect key={i} x={Math.round(10 + i * 33.1)} y={major ? 0 : 4} width="2" height={major ? 10 : 6} fill="#000" />;
            })}
          </svg>
        </div>

        {/* tracks */}
        <div className="flex border-t-2 border-black">
          <div className="flex min-w-0 flex-1 flex-col gap-2 overflow-hidden bg-[#9f9fae] pr-2 pb-[94px] pl-2">
            <div className="-mt-6">
              <Track name="TildaParty" channels={first} clip={0} faded />
            </div>
            <Track name="14 Californi" focused channels={second} clip={467} />
          </div>
          <div className="flex w-8 shrink-0 flex-col border-r-2 border-l-2 border-[#ebebeb] bg-[#fafafa] px-1.5 pt-[34px] pb-0.5">
            <span className="flex-1 rounded-full bg-[#c1c1c1]" />
          </div>
        </div>
        <div className="flex h-8 border-t-2 border-b-2 border-[#ebebeb] pr-8 pl-[272px]">
          <div className="flex flex-1 items-center bg-[#fafafa] pt-1 pl-2">
            <span className="h-4 w-[66px] rounded-lg bg-[#c1c1c1]" />
          </div>
        </div>

        {/* selection bar */}
        <div className={`${HELV} flex h-[114px] border-t-2 border-b-2 border-l-2 border-[#9f9fb0] text-[27px] leading-[32px] text-black`}>
          <Grabber bumps={12} />
          <div className="flex gap-3 py-2.5 pl-0.5">
            <div className="flex w-[216px] flex-col">
              <label htmlFor="rate" className="whitespace-nowrap">Project Rate (Hz):</label>
              <div className="flex gap-1.5 pt-2.5 pl-1">
                <input id="rate" defaultValue="44100" className={`${NOTO} h-11 w-[104px] border-2 border-[#b9b9b9] bg-white pb-0.5 pl-1 text-[27px] leading-[38px]`} />
                <button aria-label="Change rate" className="flex h-[42px] w-[42px] items-center justify-center rounded-[10px] border-2 border-t-[#2f4256] border-r-[#6e7a86] border-b-[#4a5560] border-l-[#6e7a86] bg-linear-to-b from-[#c2c8ce] via-[#a9b2bb] to-[#e4eef6]">
                  <svg width="12" height="26" viewBox="0 0 12 26" aria-hidden="true">
                    <path d="M6 0L11 9H1ZM6 26L11 17H1Z" fill="#000" />
                  </svg>
                </button>
              </div>
            </div>
            <div className="-mb-1 h-[54px] w-0.5 self-end bg-[#8e8e8e]" />
            <div className="flex w-[192px] flex-col">
              <span>Snap To:</span>
              <div className="pt-3">
                <Select label="Snap to" text="Off" box="w-48" />
              </div>
            </div>
            <div className="flex w-[296px] flex-col">
              <span>Selection Start:</span>
              <div className="pt-2.5"><TimeField label="Selection start" value="00h24m23.733s" /></div>
            </div>
            <div className="flex w-[296px] flex-col">
              <div className="flex items-center gap-1.5 pl-0.5">
                <input type="radio" id="end" name="mode" checked={mode === "end"} onChange={() => setMode("end")} className="h-8 w-8 appearance-none rounded-full border-2 border-[#b8b8b8] bg-white checked:border-[10px] checked:border-[#98989d]" />
                <label htmlFor="end">End</label>
                <input type="radio" id="length" name="mode" checked={mode === "length"} onChange={() => setMode("length")} className="ml-2 h-8 w-8 appearance-none rounded-full border-2 border-[#b8b8b8] bg-white checked:border-[10px] checked:border-[#98989d]" />
                <label htmlFor="length">Length</label>
              </div>
              <div className="pt-2.5"><TimeField label="Selection end" value="00h24m23.733s" /></div>
            </div>
            <div className="-mb-1 h-[54px] w-0.5 self-end bg-[#8e8e8e]" />
            <div className="flex w-[296px] flex-col">
              <span>Audio Position:</span>
              <div className="pt-2.5"><TimeField label="Audio position" value="00h00m00.000s" /></div>
            </div>
          </div>
        </div>

        <footer className={`${NOTO} relative flex h-9 items-center justify-between border-t-2 border-[#b9b9b9] pr-[91px] pb-1.5 pl-2.5 text-[23px] leading-[24px] text-black shadow-[inset_0_2px_0_#fff]`}>
          <span>Click and drag to edit the samples</span>
          <span>Actual Rate: 44100</span>
          <svg width="22" height="22" viewBox="0 0 22 22" className="absolute right-0.5 bottom-0.5" aria-hidden="true">
            <path d="M1 22L22 1M9 22L22 9M17 22L22 17" stroke="#8a8a8a" strokeWidth="2" />
          </svg>
        </footer>
      </main>
    </div>
  );
}
